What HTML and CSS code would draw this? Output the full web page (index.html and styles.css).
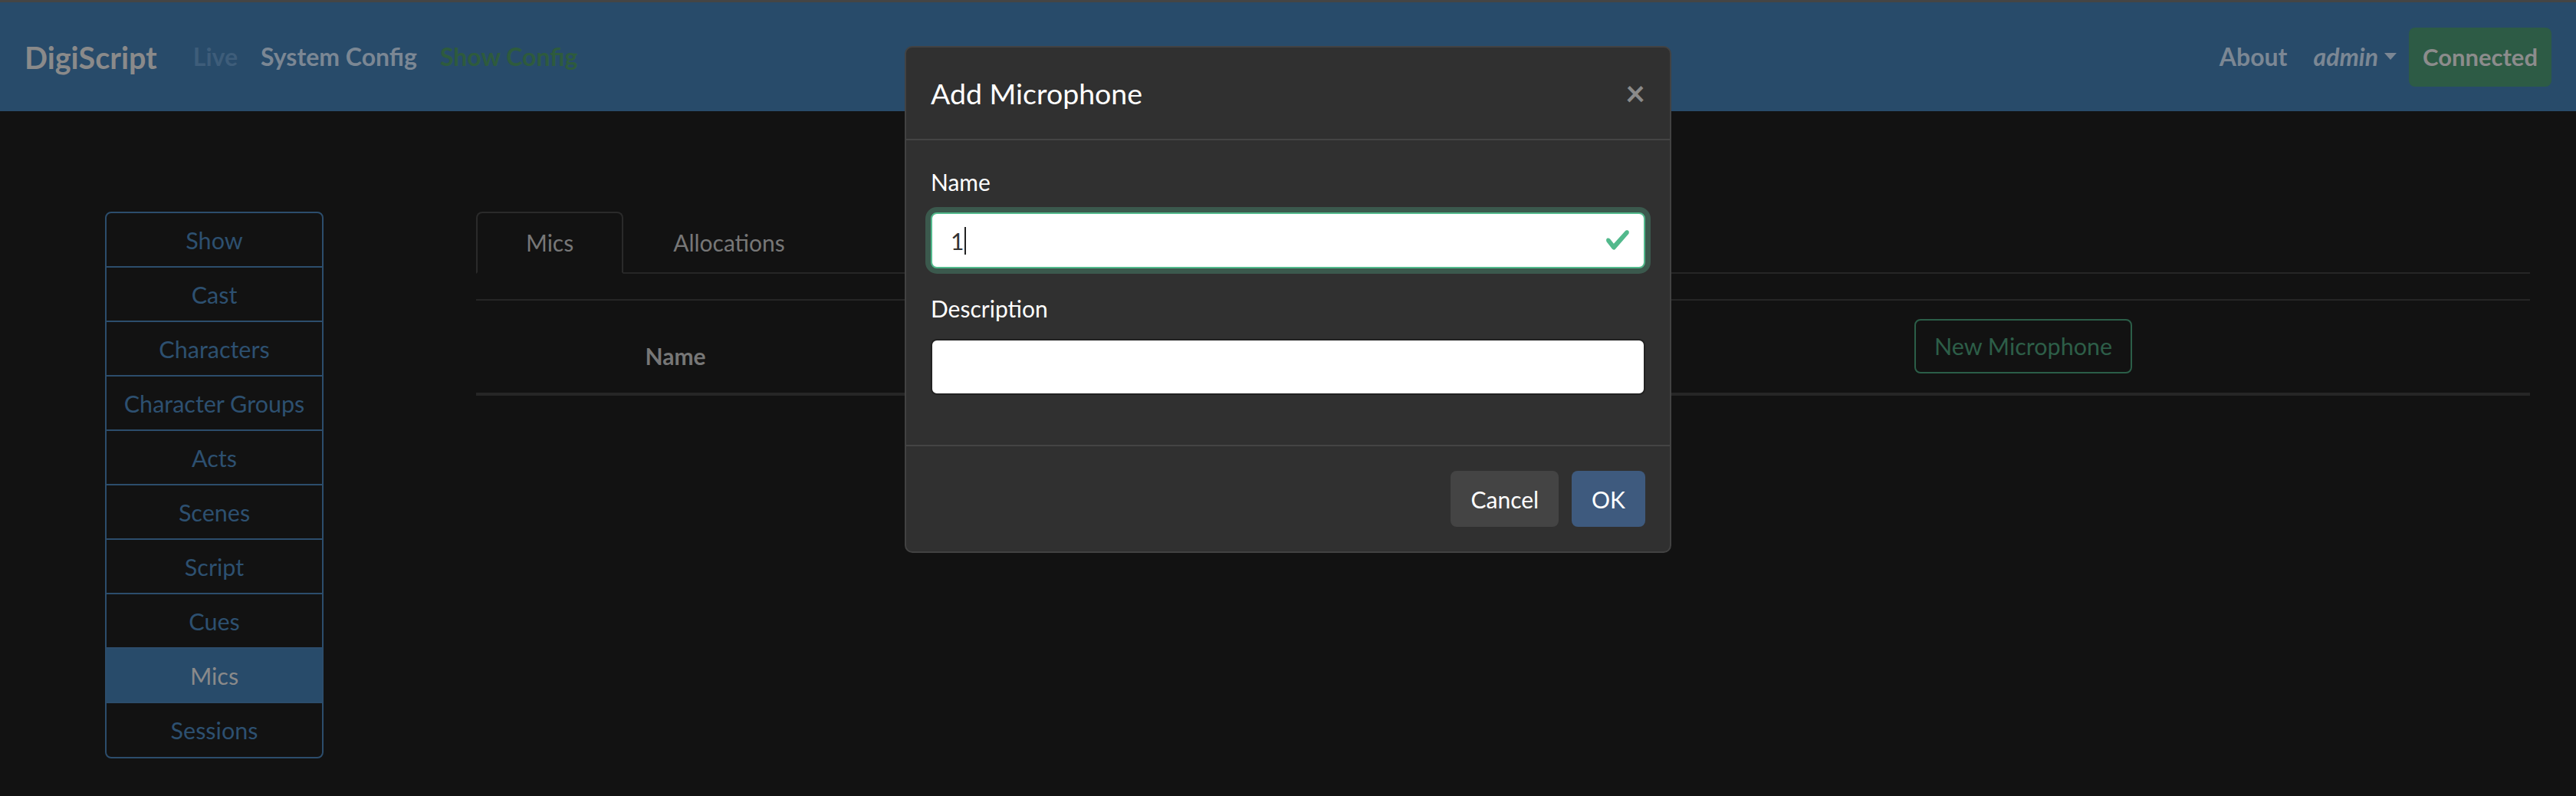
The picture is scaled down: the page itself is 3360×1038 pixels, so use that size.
FILE: index.html
```html
<!DOCTYPE html>
<html lang="en">
<head>
<meta charset="utf-8">
<title>DigiScript - Show Config</title>
<link rel="stylesheet" href="styles.css">
</head>
<body>
<div class="topline"></div>
<nav class="navbar">
  <a class="brand">DigiScript</a>
  <ul class="nav-links">
    <li class="nav-link disabled">Live</li>
    <li class="nav-link">System Config</li>
    <li class="nav-link current">Show Config</li>
  </ul>
  <div class="nav-right">
    <span class="nav-link about">About</span>
    <span class="nav-link user"><em>admin</em><span class="dd-caret"></span></span>
    <span class="btn-conn">Connected</span>
  </div>
</nav>

<main class="layout">
  <aside class="sidebar">
    <ul class="side-list">
      <li class="side-item">Show</li>
      <li class="side-item">Cast</li>
      <li class="side-item">Characters</li>
      <li class="side-item">Character Groups</li>
      <li class="side-item">Acts</li>
      <li class="side-item">Scenes</li>
      <li class="side-item">Script</li>
      <li class="side-item">Cues</li>
      <li class="side-item active">Mics</li>
      <li class="side-item">Sessions</li>
    </ul>
  </aside>
  <section class="content">
    <ul class="tabs">
      <li class="tab active">Mics</li>
      <li class="tab">Allocations</li>
    </ul>
    <div class="table-head">
      <div class="th">Name</div>
      <div class="th">Description</div>
      <div class="th"><span class="btn-outline">New Microphone</span></div>
    </div>
  </section>
</main>

<div class="modal" role="dialog">
  <header class="modal-header">
    <h5 class="modal-title">Add Microphone</h5>
    <span class="close">×</span>
  </header>
  <div class="modal-body">
    <div class="form-group">
      <label class="form-label">Name</label>
      <div class="form-control is-valid">
        <span class="value">1</span><span class="text-caret"></span>
        <svg class="valid-icon" viewBox="0 0 8 8" width="34" height="34"><path fill="#52b98c" d="M2.3 6.73L.6 4.53c-.4-1.04.46-1.4 1.1-.8l1.1 1.4 3.4-3.8c.6-.63 1.6-.27 1.2.7l-4 4.6c-.43.5-.8.4-1.1.1z"/></svg>
      </div>
    </div>
    <div class="form-group">
      <label class="form-label">Description</label>
      <div class="form-control"></div>
    </div>
  </div>
  <footer class="modal-footer">
    <span class="btn btn-secondary">Cancel</span>
    <span class="btn btn-primary">OK</span>
  </footer>
</div>
</body>
</html>
```
FILE: styles.css
```css
* { box-sizing: border-box; }
html, body {
  margin: 0;
  background: #121212;
  font-family: Lato, "Liberation Sans", sans-serif;
}
body {
  width: 3360px;
  height: 1038px;
  overflow: hidden;
  position: relative;
}
.topline { height: 3px; background: #454545; }

.navbar {
  height: 142px;
  background: #284b6a;
  display: flex;
  align-items: center;
  padding: 0 32px;
}
.brand {
  font-size: 39.5px;
  font-weight: 700;
  color: #8a8a8a;
  margin-right: 32px;
}
.nav-links { display: flex; list-style: none; margin: 0; padding: 0; }
.nav-link {
  padding: 0 15px;
  font-size: 32px;
  font-weight: 700;
  color: #7b8794;
  line-height: 48px;
}
.nav-link.disabled { color: #3e5d7a; }
.nav-link.current { color: #2e5b3d; }
.nav-right { margin-left: auto; display: flex; align-items: center; }
.nav-right .nav-link { padding: 0 16px; }
.nav-right .nav-link.about { padding-right: 18px; }
.nav-link.user em { font-weight: 700; }
.nav-right .nav-link.user { padding-right: 16px; }
.dd-caret {
  display: inline-block;
  margin-left: 8px;
  vertical-align: 8px;
  border-top: 9px solid #7b8794;
  border-left: 8.5px solid transparent;
  border-right: 8.5px solid transparent;
}
.btn-conn {
  height: 77px;
  display: inline-flex;
  align-items: center;
  padding: 0 18px;
  background: #2d5b45;
  border-radius: 8px;
  color: #8c8c8c;
  font-size: 31px;
  font-weight: 700;
}

.layout {
  display: flex;
  padding: 131px 60px 0 137px;
}
.sidebar { width: 285px; flex: none; }
.side-list {
  list-style: none;
  margin: 0;
  padding: 0;
  border: 2px solid #2c4d6c;
  border-radius: 8px;
  overflow: hidden;
}
.side-item {
  box-sizing: content-box;
  height: 69px;
  padding-bottom: 1px;
  margin-bottom: -1px;
  display: flex;
  align-items: center;
  justify-content: center;
  font-size: 30.5px;
  color: #2d5070;
}
.side-item:last-child { margin-bottom: 0; }
.side-item + .side-item { border-top: 2px solid #2c4d6c; }
.side-item.active { background: #284b6a; color: #8a8a8a; }

.content { margin-left: 199px; flex: 1; }
.tabs {
  display: flex;
  list-style: none;
  margin: 0;
  padding: 0;
  border-bottom: 2px solid #262626;
}
.tab {
  padding: 16px 63px;
  border: 2px solid transparent;
  border-radius: 8px 8px 0 0;
  margin-bottom: -2px;
  font-size: 30px;
  line-height: 45px;
  color: #777;
}
.tab.active {
  border-color: #2a2a2a #2a2a2a #121212;
  background: #121212;
}

.table-head {
  margin-top: 33px;
  display: grid;
  grid-template-columns: 520px 837px 1fr;
  border-top: 2px solid #262626;
  border-bottom: 4px solid #262626;
}
.th {
  padding: 24px 22px 25px;
  text-align: center;
  align-self: end;
  font-size: 30px;
  line-height: 45px;
  font-weight: 700;
  color: #777;
}
.btn-outline {
  display: inline-flex;
  align-items: center;
  height: 71px;
  padding: 0 24px;
  border: 2px solid #2b5e48;
  border-radius: 8px;
  color: #2d5e48;
  font-size: 30.5px;
  font-weight: 400;
  vertical-align: bottom;
}

.modal {
  position: absolute;
  left: 1180px;
  top: 60px;
  width: 1000px;
  background: #303030;
  border: 2px solid #424242;
  border-radius: 10px;
  color: #fff;
}
.modal-header {
  display: flex;
  align-items: flex-start;
  padding: 31px 32px;
  border-bottom: 2px solid #444;
}
.modal-title {
  margin: 0;
  font-size: 37.5px;
  font-weight: 400;
  line-height: 57px;
}
.close {
  margin-left: auto;
  font-size: 45px;
  font-weight: 700;
  line-height: 57px;
  color: #8a8a8a;
}
.modal-body { padding: 32px 32px 35px; }
.form-group { margin-bottom: 30px; }
.form-label {
  display: block;
  font-size: 30px;
  line-height: 45px;
  margin-bottom: 17px;
}
.form-control {
  position: relative;
  height: 73px;
  display: flex;
  align-items: center;
  padding: 0 24px;
  background: #fff;
  border: 2px solid #222;
  border-radius: 8px;
  font-size: 30px;
  color: #333;
}
.form-control.is-valid {
  border-color: #52b98c;
  box-shadow: 0 0 0 7px #3b594d;
}
.text-caret {
  display: inline-block;
  width: 2px;
  height: 36px;
  background: #222;
  margin-left: 1px;
}
.valid-icon {
  position: absolute;
  right: 17px;
  top: 17px;
}
.modal-footer {
  display: flex;
  justify-content: flex-end;
  gap: 17px;
  padding: 32px;
  border-top: 2px solid #444;
}
.btn {
  height: 73px;
  display: inline-flex;
  align-items: center;
  padding: 0 26px;
  border-radius: 8px;
  font-size: 30px;
  color: #fff;
}
.btn-secondary { background: #444; }
.btn-primary { background: #3e5a7e; }
```
